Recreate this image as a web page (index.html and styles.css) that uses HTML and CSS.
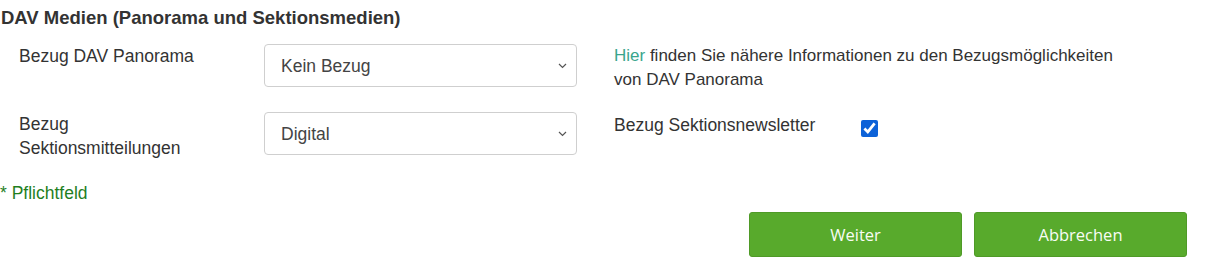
FILE: index.html
```html
<!DOCTYPE html>
<html lang="de">
<head>
    <meta charset="UTF-8">
    <meta name="viewport" content="width=device-width, initial-scale=1.0">
    <title>DAV Medien</title>
    <link rel="stylesheet" href="styles.css">
</head>
<body>
    <div class="section">
        <h2 class="section-title">DAV Medien (Panorama und Sektionsmedien)</h2>

        <!-- Panorama -->
        <div class="form-row">
            <label class="form-label" for="panorama">Bezug DAV Panorama</label>
            <div class="select-wrap">
                <select id="panorama" class="form-select">
                    <option>Kein Bezug</option>
                    <option>Print</option>
                    <option>Digital</option>
                </select>
                <svg class="chevron" width="9" height="6" viewBox="0 0 9 6"><path d="M1 1l3.5 3.5L8 1" fill="none" stroke="#555" stroke-width="1.2"/></svg>
            </div>
            <p class="info-text"><a href="#" class="info-link">Hier</a> finden Sie nähere Informationen zu den Bezugsmöglichkeiten von DAV Panorama</p>
        </div>

        <!-- Sektionsmitteilungen -->
        <div class="form-row">
            <label class="form-label" for="mitteilungen">Bezug Sektionsmitteilungen</label>
            <div class="select-wrap">
                <select id="mitteilungen" class="form-select">
                    <option>Digital</option>
                    <option>Print</option>
                    <option>Kein Bezug</option>
                </select>
                <svg class="chevron" width="9" height="6" viewBox="0 0 9 6"><path d="M1 1l3.5 3.5L8 1" fill="none" stroke="#555" stroke-width="1.2"/></svg>
            </div>
            <div class="check-group">
                <label class="check-label" for="newsletter">Bezug Sektionsnewsletter</label>
                <input type="checkbox" id="newsletter" class="check-input" checked>
            </div>
        </div>

        <p class="required-note">* Pflichtfeld</p>

        <div class="actions">
            <button class="btn">Weiter</button>
            <button class="btn">Abbrechen</button>
        </div>
    </div>
</body>
</html>
```

FILE: styles.css
```css
/* General Reset */
* {
    margin: 0;
    padding: 0;
    box-sizing: border-box;
}

body {
    font-family: 'Liberation Sans', Arial, sans-serif;
    font-size: 17.5px;
    color: #333;
    background: #fff;
}

.section {
    padding-top: 8px;
}

.section-title {
    font-size: 18.5px;
    font-weight: bold;
    line-height: 20px;
    padding-left: 1px;
    margin-bottom: 16px;
}

/* Form rows */
.form-row {
    display: flex;
    align-items: flex-start;
    margin-bottom: 20px;
    line-height: 24px;
}

.form-label {
    width: 264px;
    padding-left: 19px;
    padding-right: 40px;
}

.select-wrap {
    position: relative;
    width: 313px;
}

.form-select {
    appearance: none;
    -webkit-appearance: none;
    width: 100%;
    height: 43px;
    padding: 0 30px 0 16px;
    font-family: 'Liberation Sans', Arial, sans-serif;
    font-size: 17.5px;
    color: #444;
    background: #fff;
    border: 1px solid #cfcfcf;
    border-radius: 4px;
}

.chevron {
    position: absolute;
    right: 10px;
    top: 19px;
    pointer-events: none;
}

.info-text {
    margin-left: 37px;
    width: 515px;
    font-size: 17px;
}

.info-link {
    color: #3aa58c;
    text-decoration: none;
}

.check-group {
    display: flex;
    align-items: flex-start;
    margin-left: 37px;
    margin-top: 1px;
}

.check-label {
    width: 247px;
}

.check-input {
    width: 17px;
    height: 17px;
    margin-top: 7px;
    accent-color: #0d62d8;
}

/* Footer bits */
.required-note {
    color: #1f7f1f;
    line-height: 24px;
    margin-top: 21px;
}

.actions {
    display: flex;
    justify-content: flex-end;
    gap: 12px;
    padding-right: 18px;
    margin-top: 7px;
}

.btn {
    width: 213px;
    height: 45px;
    background: #58aa2c;
    border: 1px solid #4f9a27;
    border-radius: 3px;
    color: #f8fcf5;
    font-family: 'Open Sans', sans-serif;
    font-size: 16.5px;
    cursor: pointer;
}
```
